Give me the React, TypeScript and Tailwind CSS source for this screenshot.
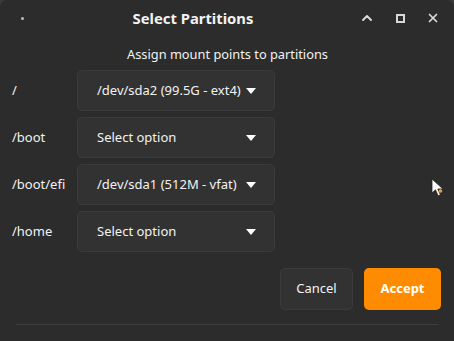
import { ChevronUp, X } from 'lucide-react';

const ROWS = [
  { mount: '/', value: '/dev/sda2 (99.5G - ext4)' },
  { mount: '/boot', value: 'Select option' },
  { mount: '/boot/efi', value: '/dev/sda1 (512M - vfat)' },
  { mount: '/home', value: 'Select option' },
];

function Caret() {
  return (
    <svg width="10" height="6" viewBox="0 0 10 6" className="shrink-0">
      <path d="M0 0h10L5 6z" fill="#ffffff" />
    </svg>
  );
}

export default function App() {
  return (
    <div
      className="relative w-[454px] h-[341px] bg-[#3a3a3a] overflow-hidden text-[#f2f2f2]"
      style={{ fontFamily: '"Noto Sans", "Open Sans", sans-serif' }}
    >
      <div className="flex flex-col h-full bg-[#2c2c2c] rounded-t-[7px]">
        {/* header bar */}
        <div className="relative h-[36px] flex items-center">
          <span className="absolute left-[21px] top-[17px] w-[3px] h-[3px] rounded-full bg-[#bdbdbd]" />
          <div className="flex-1 text-center text-[14.8px] font-bold pr-[68px]">Select Partitions</div>
          <div className="absolute right-[14px] top-0 h-full flex items-center gap-[20px] text-[#d8d8d8]">
            <ChevronUp className="w-[16px] h-[16px]" strokeWidth={3} />
            <span className="w-[9px] h-[9px] border-[2px] border-[#d8d8d8] mx-[1px]" />
            <X className="w-[14px] h-[14px]" strokeWidth={3} />
          </div>
        </div>

        <div className="text-center text-[12.8px] mt-[9px] leading-[18px] pl-[1px]">
          Assign mount points to partitions
        </div>

        {/* mount rows */}
        <div className="flex flex-col gap-[6px] mt-[7px] pl-[12px]">
          {ROWS.map(row => (
            <div key={row.mount} className="flex items-center">
              <div className="w-[65px] text-[13px]">{row.mount}</div>
              <div className="w-[198px] h-[41px] flex items-center justify-between pl-[19px] pr-[18px] bg-[#323232] border border-[#3b3b3b] rounded-[5px] text-[13px]">
                <span>{row.value}</span>
                <Caret />
              </div>
            </div>
          ))}
        </div>

        {/* actions */}
        <div className="flex justify-end gap-[11px] mt-[16px] pr-[13px]">
          <button className="w-[73px] h-[42px] bg-[#323232] border border-[#3b3b3b] rounded-[5px] text-[13px] text-[#f2f2f2]">
            Cancel
          </button>
          <button className="w-[77px] h-[42px] bg-[#ff8c00] rounded-[5px] text-[13px] font-bold text-white">
            Accept
          </button>
        </div>

        <div className="mx-[16px] mt-[14px] h-px bg-[#3d3d3d]" />
      </div>

      {/* mouse pointer */}
      <svg width="14" height="20" viewBox="0 0 14 20" className="absolute left-[431px] top-[178px]">
        <path d="M1 1v14l3.5-3.2 2.6 6 2.3-1-2.6-5.8H12z" fill="#ffffff" stroke="#222" strokeWidth="0.8" />
        <circle cx="9.5" cy="13" r="1.8" fill="#f0a020" />
      </svg>
    </div>
  );
}
